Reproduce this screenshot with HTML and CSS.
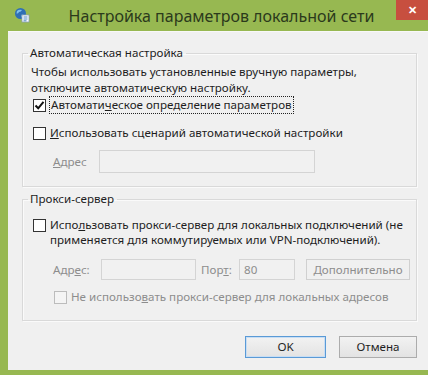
FILE: index.html
```html
<!DOCTYPE html>
<html lang="ru">
<head>
    <meta charset="UTF-8">
    <title>Настройка параметров локальной сети</title>
    <link rel="stylesheet" href="styles.css">
</head>
<body>
    <div class="window">
        <div class="titlebar">
            <svg class="app-icon" width="16" height="16" viewBox="0 0 16 16">
                <circle cx="6.5" cy="6.5" r="5.5" fill="#2f6fb5"/>
                <path d="M3 4 Q5 2 8 3 Q7 5 5 5 Q4 7 2.5 6.5 Z" fill="#7fc0ee"/>
                <path d="M7 8 Q9 7 10.5 8.5 Q9 11 7 10 Z" fill="#5aa2de"/>
                <rect x="8" y="8" width="7" height="7" fill="#fff" stroke="#8aa0b8" stroke-width="0.8"/>
                <path d="M9.5 10h4M9.5 12h4M9.5 13.8h3" stroke="#3a78c0" stroke-width="0.9"/>
            </svg>
            <div class="title">Настройка параметров локальной сети</div>
            <div class="close-btn">&#x2715;</div>
        </div>

        <div class="client">
            <fieldset class="group auto">
                <legend>Автоматическая настройка</legend>
                <p class="hint">Чтобы использовать установленные вручную параметры, отключите автоматическую настройку.</p>

                <div class="check-row first">
                    <span class="box checked">
                        <svg width="11" height="11" viewBox="0 0 11 11"><path d="M1.5 5.5 L4.2 8.3 L9.5 1.8" fill="none" stroke="#111" stroke-width="2"/></svg>
                    </span>
                    <span class="focus">Автомати<u>ч</u>еское определение параметров</span>
                </div>

                <div class="check-row second">
                    <span class="box"></span>
                    <span><u>И</u>спользовать сценарий автоматической настройки</span>
                </div>

                <div class="field-row script">
                    <span class="dim"><u>А</u>дрес</span>
                    <span class="input wide"></span>
                </div>
            </fieldset>

            <fieldset class="group proxy">
                <legend>Прокси-сервер</legend>

                <div class="check-row multi">
                    <span class="box"></span>
                    <span>Испо<u>л</u>ьзовать прокси-сервер для локальных подключений (не применяется для коммутируемых или VPN-подключений).</span>
                </div>

                <div class="field-row address">
                    <span class="dim addr-label">Адр<u>е</u>с:</span>
                    <span class="input addr"></span>
                    <span class="dim port-label">Пор<u>т</u>:</span>
                    <span class="input port">80</span>
                    <span class="button disabled"><u>Д</u>ополнительно</span>
                </div>

                <div class="check-row bypass">
                    <span class="box off"></span>
                    <span class="dim">Не использо<u>в</u>ать прокси-сервер для локальных адресов</span>
                </div>
            </fieldset>

            <div class="actions">
                <span class="button default">OK</span>
                <span class="button">Отмена</span>
            </div>
        </div>
    </div>
</body>
</html>
```

FILE: styles.css
```css
* {
    margin: 0;
    padding: 0;
    box-sizing: border-box;
}

body {
    font-family: 'Noto Sans', 'Open Sans', sans-serif;
    font-size: 11.6px;
    color: #1e1e1e;
    background: #97b851;
    width: 428px;
    height: 375px;
    overflow: hidden;
}

.window {
    background: #97b851;
    padding-left: 8px;
    height: 375px;
}

.titlebar {
    height: 31px;
    display: flex;
    align-items: flex-start;
    position: relative;
}

.app-icon {
    margin: 7px 0 0 6px;
}

.title {
    flex: 1;
    text-align: center;
    font-size: 16px;
    line-height: 20px;
    color: #2b3a1c;
    padding: 6px 15px 0 0;
}

.close-btn {
    position: absolute;
    top: 0;
    right: 0;
    width: 32px;
    height: 20px;
    background: #c74f3f;
    color: #fff;
    font-size: 11px;
    font-weight: bold;
    line-height: 20px;
    text-align: center;
}

.client {
    height: 339px;
    background: #f0f0f0;
    border-top: 1px solid #f8f8f8;
    padding: 13px 11px 0 14px;
}

.group {
    border: 1px solid #d9d9d9;
    box-shadow: inset 1px 1px 0 #fafafa, 1px 1px 0 #fafafa;
    padding: 0 8px 0 8px;
}

.group legend {
    line-height: 16px;
    padding: 0 3px 0 2px;
    margin-left: -3px;
}

.auto {
    height: 142px;
}

.proxy {
    margin-top: 4px;
    height: 130px;
    padding-right: 3px;
}

.hint {
    line-height: 16px;
    margin-top: 3px;
    padding-right: 20px;
}

.check-row {
    display: flex;
    align-items: center;
    gap: 4px;
    line-height: 16px;
    padding-left: 2px;
}

.check-row.first {
    margin-top: 1px;
}

.check-row.second {
    margin-top: 12px;
}

.check-row.multi {
    align-items: flex-start;
    margin-top: 10px;
    line-height: 15px;
}

.check-row.multi .box {
    margin-top: 2px;
}

.check-row.bypass {
    margin-top: 9px;
    padding-left: 23px;
}

.box {
    flex: none;
    width: 13px;
    height: 13px;
    border: 1px solid #333;
    background: #fff;
    display: flex;
    align-items: center;
    justify-content: center;
}

.box.off {
    border-color: #bcbcbc;
    background: #f4f4f4;
}

.focus {
    outline: 1px dotted #222;
    outline-offset: 0;
    padding: 0 1px;
}

.dim {
    color: #8d8d8d;
}

.field-row {
    display: flex;
    align-items: center;
}

.field-row.script {
    margin-top: 9px;
    padding-left: 22px;
    gap: 12px;
}

.input {
    height: 23px;
    border: 1px solid #d4d4d4;
    background: #f1f1f1;
    color: #8d8d8d;
    line-height: 21px;
    padding-left: 4px;
}

.input.wide {
    width: 216px;
}

.field-row.address {
    margin-top: 12px;
    padding-left: 22px;
}

.addr-label {
    width: 48px;
}

.input.addr {
    width: 95px;
    height: 21px;
    line-height: 19px;
}

.port-label {
    margin-left: 5px;
    width: 38px;
}

.input.port {
    width: 56px;
    height: 21px;
    line-height: 19px;
}

.button {
    display: inline-block;
    text-align: center;
    border: 1px solid #acacac;
    background: linear-gradient(#f2f2f2, #e3e3e3);
    color: #1e1e1e;
}

.button.disabled {
    margin-left: 11px;
    width: 104px;
    height: 21px;
    line-height: 19px;
    color: #8d8d8d;
    border-color: #d0d0d0;
    background: #f0f0f0;
}

.actions {
    display: flex;
    justify-content: flex-end;
    gap: 13px;
    margin-top: 15px;
}

.actions .button {
    width: 78px;
    height: 22px;
    line-height: 20px;
}

.actions .button.default {
    width: 81px;
    border-color: #5a9ad6;
    box-shadow: inset 0 0 0 1px #c8def4;
}
```
